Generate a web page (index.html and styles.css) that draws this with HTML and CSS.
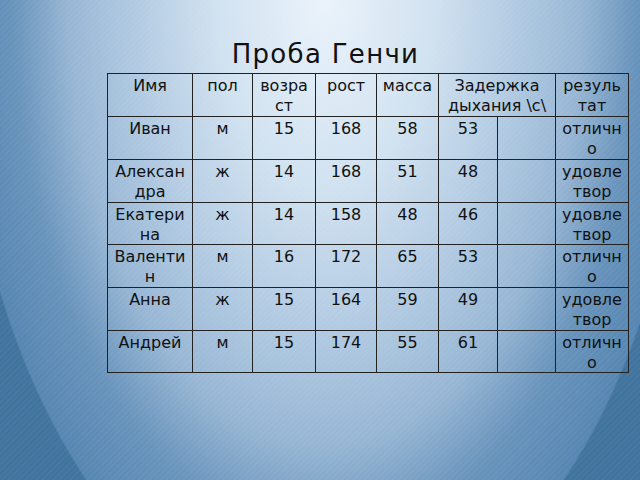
FILE: index.html
```html
<!DOCTYPE html>
<html lang="ru">
<head>
<meta charset="utf-8">
<title>Проба Генчи</title>
<link rel="stylesheet" href="styles.css">
</head>
<body>
<div class="slide">
  <h1 class="title">Проба Генчи</h1>
  <div class="grid">
    <div class="c">Имя</div><div class="c">пол</div><div class="c">возраст</div><div class="c">рост</div><div class="c tight">масса</div><div class="c span2">Задержка дыхания \с\</div><div class="c">результат</div>
    <div class="c">Иван</div><div class="c">м</div><div class="c">15</div><div class="c">168</div><div class="c">58</div><div class="c">53</div><div class="c"></div><div class="c">отлично</div>
    <div class="c">Александра</div><div class="c">ж</div><div class="c">14</div><div class="c">168</div><div class="c">51</div><div class="c">48</div><div class="c"></div><div class="c">удовлетвор</div>
    <div class="c">Екатерина</div><div class="c">ж</div><div class="c">14</div><div class="c">158</div><div class="c">48</div><div class="c">46</div><div class="c"></div><div class="c">удовлетвор</div>
    <div class="c">Валентин</div><div class="c">м</div><div class="c">16</div><div class="c">172</div><div class="c">65</div><div class="c">53</div><div class="c"></div><div class="c">отлично</div>
    <div class="c">Анна</div><div class="c">ж</div><div class="c">15</div><div class="c">164</div><div class="c">59</div><div class="c">49</div><div class="c"></div><div class="c">удовлетвор</div>
    <div class="c">Андрей</div><div class="c">м</div><div class="c">15</div><div class="c">174</div><div class="c">55</div><div class="c">61</div><div class="c"></div><div class="c">отлично</div>
  </div>
</div>
</body>
</html>
```
FILE: styles.css
```css
html, body {
  margin: 0;
  padding: 0;
}

.slide {
  width: 640px;
  height: 480px;
  box-sizing: border-box;
  padding-top: 39px;
  display: flex;
  flex-direction: column;
  background-color: #41739f;
  background-image:
    repeating-linear-gradient(135deg, rgba(255,255,255,0.035) 0 2px, rgba(255,255,255,0) 2px 4px),
    radial-gradient(367px 634px at 325px 0, #eaf3fb 0%, #d0e1f0 30%, #adc7e0 55%, #97b6d4 70%, #6893bb 85%, #5686b2 99.6%, #41739f 100%);
  color: #111;
  font-family: "DejaVu Sans", sans-serif;
}

.title {
  margin: 0;
  padding-left: 11px;
  font-size: 26px;
  line-height: 30px;
  font-weight: 400;
  letter-spacing: 1.3px;
  text-align: center;
}

.grid {
  margin: 4px 0 0 107px;
  width: max-content;
  display: grid;
  grid-template-columns: 85px 60px 63px 61px 62px 59px 58px 73px;
  grid-template-rows: 43px 43px 43px 42px 43px 43px 42px;
  border-left: 1px solid #222;
  border-top: 1px solid #222;
}

.c {
  box-sizing: border-box;
  min-width: 0;
  border-right: 1px solid #222;
  border-bottom: 1px solid #222;
  padding: 2px 6px 0;
  font-size: 16px;
  line-height: 20px;
  text-align: center;
  overflow-wrap: anywhere;
}

.tight {
  padding-left: 2px;
  padding-right: 2px;
}

.span2 {
  grid-column: span 2;
}
```
